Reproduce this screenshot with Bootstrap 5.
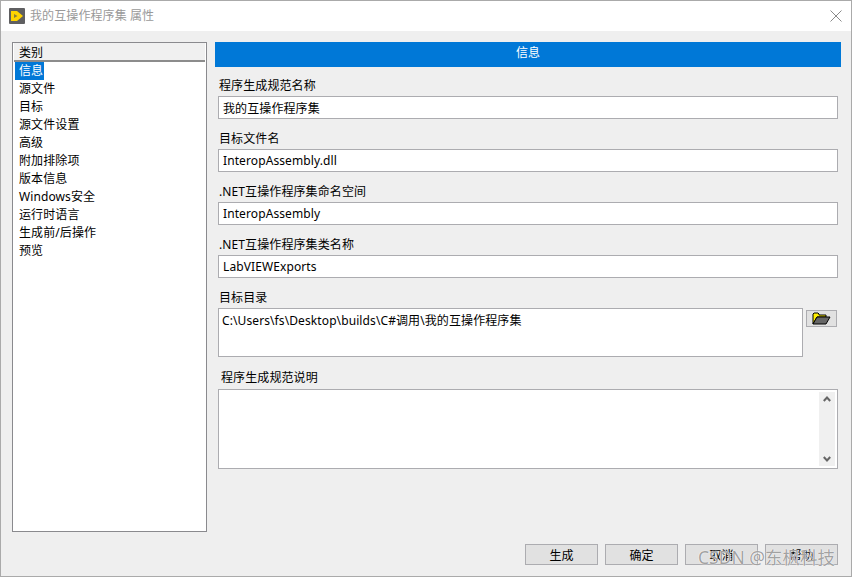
<!DOCTYPE html>
<html lang="zh-CN">
<head>
    <meta charset="UTF-8">
    <title>我的互操作程序集 属性</title>
    <link href="https://cdn.jsdelivr.net/npm/bootstrap@5.3.0/dist/css/bootstrap.min.css" rel="stylesheet">
    <style>
        html, body { height: 577px; overflow: hidden; }
        body { font-family: "Noto Sans", "Noto Sans CJK SC", sans-serif; font-size: 12px; letter-spacing: .1px; line-height: 18px; color: #000; background: #efefef; position: relative; }
        .dlg { height: 577px; border: 1px solid #aaa; }
        .dlg-title { height: 30px; background: #fff; color: #999; padding-left: 8px; gap: 5px; }
        .dlg-close { margin-left: auto; margin-right: 9px; }
        .dlg-body { padding: 11px 10px 0 11px; gap: 8px; height: 472px; }
        .cat-panel { width: 195px; height: 490px; border: 1px solid #8a8a8e; background: #fff; padding: 0 1px; flex: none; }
        .cat-head { height: 19px; padding-left: 5px; background: #f0f0f0; border-bottom: 2px solid #8c8c8c; line-height: 19px; }
        .cat-item { height: 18px; padding-left: 5px; }
        .cat-on { display: inline-block; background: #0078d7; color: #fff; margin-left: -4px; padding: 0 1px 0 4px; }
        .main-pane { width: 626px; flex: none; }
        .info-bar { height: 25px; background: #0078d7; color: #fff; text-align: center; line-height: 22px; margin-bottom: 10px; }
        .fld { margin-left: 3px; width: 620px; margin-bottom: 11px; }
        .fld-label { height: 19px; padding-left: 1px; display: block; margin: 0; line-height: 17px; }
        .fld-input { height: 23px; border: 1px solid #acacb0; border-radius: 0; padding: 0 4px; font-size: 12px; letter-spacing: .1px; line-height: 18px; color: #000; background: #fff; }
        .dir-row { gap: 3px; }
        .dir-box { width: 585px; height: 49px; flex: none; resize: none; padding: 3px 3px 0; }
        .browse-btn { width: 31px; height: 17px; padding: 0; margin-top: 2px; border: 1px solid #acacb0; border-radius: 0; background: #e1e1e1; line-height: 1; }
        .desc-label { padding-left: 3px; margin-top: 12px; height: 20px; line-height: 17px; }
        .desc-box { height: 80px; border: 1px solid #acacb0; background: #fff; padding: 2px 2px 2px 0; }
        .desc-scroll { width: 16px; height: 74px; background: #f0f0f0; flex: none; padding: 4px 0; }
        .dlg-foot { gap: 7px; padding-right: 13px; margin-top: 41px; }
        .foot-btn { width: 73px; height: 21px; padding: 1px 0 0; border: 1px solid #acacb0; border-radius: 0; background: #e1e1e1; color: #000; font-size: 12px; line-height: 17px; }
        .csdn-mark { position: absolute; left: 698px; top: 545px; font-size: 17.5px; line-height: 24px; color: rgba(120,120,120,.7); text-shadow: 0 0 1px #fff, 0 0 1px #fff; letter-spacing: 0; white-space: nowrap; }
    </style>
</head>
<body>
    <div class="dlg d-flex flex-column">
        <div class="dlg-title d-flex align-items-center">
            <svg width="16" height="16" viewBox="0 0 16 16">
                <rect width="16" height="16" rx="1" fill="#5f5f61"/>
                <path d="M2 3h6l6 5-6 5H2z" fill="#ffd400"/>
                <path d="M5 6l3.5 2L5 10z" fill="#8a7f3a"/>
            </svg>
            <span>我的互操作程序集 属性</span>
            <svg class="dlg-close" width="12" height="12" viewBox="0 0 12 12"><path d="M.5.5l11 11M11.5.5l-11 11" stroke="#8a8a8a" stroke-width="1" fill="none"/></svg>
        </div>
        <div class="dlg-body d-flex">
            <div class="cat-panel">
                <div class="cat-head">类别</div>
                <div class="cat-list">
                    <div class="cat-item"><span class="cat-on">信息</span></div>
                    <div class="cat-item">源文件</div>
                    <div class="cat-item">目标</div>
                    <div class="cat-item">源文件设置</div>
                    <div class="cat-item">高级</div>
                    <div class="cat-item">附加排除项</div>
                    <div class="cat-item">版本信息</div>
                    <div class="cat-item">Windows安全</div>
                    <div class="cat-item">运行时语言</div>
                    <div class="cat-item">生成前/后操作</div>
                    <div class="cat-item">预览</div>
                </div>
            </div>
            <div class="main-pane">
                <div class="info-bar">信息</div>
                <div class="fld">
                    <label class="fld-label">程序生成规范名称</label>
                    <input class="form-control fld-input" value="我的互操作程序集">
                </div>
                <div class="fld">
                    <label class="fld-label">目标文件名</label>
                    <input class="form-control fld-input" value="InteropAssembly.dll">
                </div>
                <div class="fld">
                    <label class="fld-label">.NET互操作程序集命名空间</label>
                    <input class="form-control fld-input" value="InteropAssembly">
                </div>
                <div class="fld">
                    <label class="fld-label">.NET互操作程序集类名称</label>
                    <input class="form-control fld-input" value="LabVIEWExports">
                </div>
                <div class="fld mb-0">
                    <label class="fld-label">目标目录</label>
                    <div class="d-flex align-items-start dir-row">
                        <textarea class="form-control fld-input dir-box">C:\Users\fs\Desktop\builds\C#调用\我的互操作程序集</textarea>
                        <button class="btn browse-btn d-flex align-items-center justify-content-center" type="button">
                            <svg width="19" height="13" viewBox="0 0 19 13">
                                <path d="M1 12V2l1-1h4l1 1v1h7v2H5L1 12z" fill="#ffef00" stroke="#000" stroke-width="1"/>
                                <path d="M1 12l4-7h13l-4 7z" fill="#666" stroke="#000" stroke-width="1"/>
                            </svg>
                        </button>
                    </div>
                </div>
                <div class="fld mb-0">
                    <label class="fld-label desc-label">程序生成规范说明</label>
                    <div class="desc-box d-flex justify-content-end">
                        <div class="desc-scroll d-flex flex-column justify-content-between align-items-center">
                            <svg width="8" height="6" viewBox="0 0 8 6"><path d="M.8 5L4 1.5 7.2 5" stroke="#666" stroke-width="2" fill="none"/></svg>
                            <svg width="8" height="6" viewBox="0 0 8 6"><path d="M.8 1L4 4.5 7.2 1" stroke="#666" stroke-width="2" fill="none"/></svg>
                        </div>
                    </div>
                </div>
            </div>
        </div>
        <div class="dlg-foot d-flex justify-content-end">
            <button class="btn foot-btn" type="button">生成</button>
            <button class="btn foot-btn" type="button">确定</button>
            <button class="btn foot-btn" type="button">取消</button>
            <button class="btn foot-btn" type="button">帮助</button>
        </div>
    </div>
    <div class="csdn-mark">CSDN @东枫科技</div>
    <script src="https://cdn.jsdelivr.net/npm/bootstrap@5.3.0/dist/js/bootstrap.bundle.min.js"></script>
</body>
</html>
